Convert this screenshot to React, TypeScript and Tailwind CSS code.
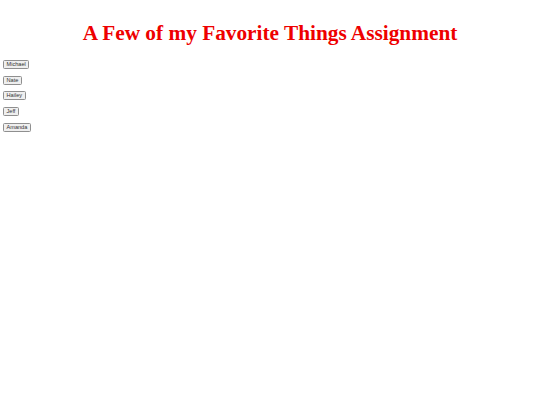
export default function App() {
    const names = ["Michael", "Nate", "Hailey", "Jeff", "Amanda"];

    return (
        <div className="min-h-[405px] bg-white px-[3px]">
            <h1 className="pt-[21px] pb-[14px] text-center text-[21.3px] leading-[25px] font-bold text-[#ee0000] font-['Liberation_Serif',serif]">
                A Few of my Favorite Things Assignment
            </h1>
            <div className="flex flex-col gap-[6.7px] items-start">
                {names.map((name) => (
                    <button
                        key={name}
                        className="h-[9px] px-[2.5px] text-[5.6px] leading-[7px] text-[#333] bg-[#efefef] border border-[#8f8f8f] rounded-[1.5px] font-['Liberation_Sans',sans-serif]"
                    >
                        {name}
                    </button>
                ))}
            </div>
        </div>
    );
}
